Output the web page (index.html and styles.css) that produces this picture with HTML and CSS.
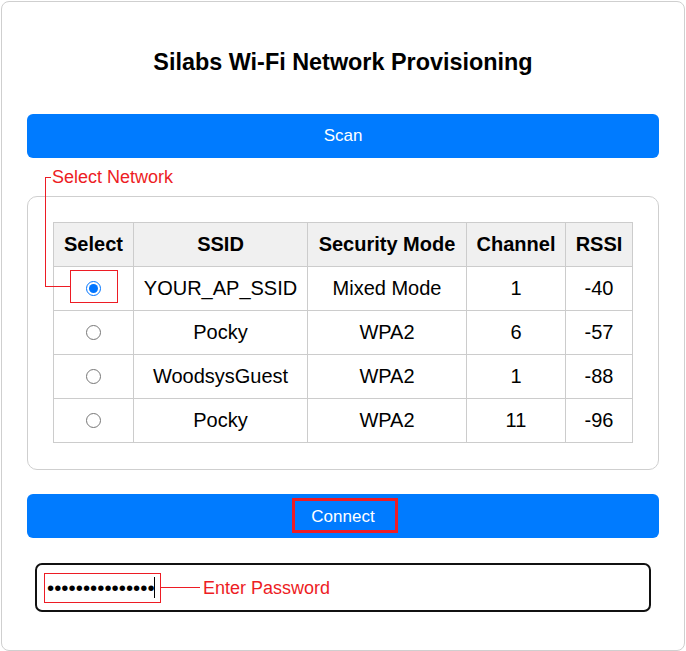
FILE: index.html
```html
<!DOCTYPE html>
<html>
<head>
<meta charset="utf-8">
<link rel="stylesheet" href="styles.css">
</head>
<body>
<div class="card">
  <h1 class="title">Silabs Wi-Fi Network Provisioning</h1>
  <button class="btn">Scan</button>
  <div class="spacer"></div>
  <div class="netbox">
    <table class="nets">
      <thead>
        <tr><th class="c1">Select</th><th class="c2">SSID</th><th class="c3">Security Mode</th><th class="c4">Channel</th><th class="c5">RSSI</th></tr>
      </thead>
      <tbody>
        <tr><td><input type="radio" name="net" checked></td><td>YOUR_AP_SSID</td><td>Mixed Mode</td><td>1</td><td>-40</td></tr>
        <tr><td><input type="radio" name="net"></td><td>Pocky</td><td>WPA2</td><td>6</td><td>-57</td></tr>
        <tr><td><input type="radio" name="net"></td><td>WoodsysGuest</td><td>WPA2</td><td>1</td><td>-88</td></tr>
        <tr><td><input type="radio" name="net"></td><td>Pocky</td><td>WPA2</td><td>11</td><td>-96</td></tr>
      </tbody>
    </table>
  </div>
  <button class="btn btn-connect">Connect</button>
  <div class="pwrow">
    <input class="pw" type="password" value="123456789012345">
  </div>
</div>
<div class="overlay">
  <span class="ann-label ann-select">Select Network</span>
  <div class="ln ln-a"></div>
  <div class="ln ln-b"></div>
  <div class="ln ln-c"></div>
  <div class="box box-radio"></div>
  <div class="box box-connect"></div>
  <div class="box box-pw"></div>
  <div class="ln ln-pw"></div>
  <span class="ann-label ann-pw">Enter Password</span>
  <div class="caret"></div>
</div>
</body>
</html>
```

FILE: styles.css
```css
* { box-sizing: border-box; }
html, body { margin: 0; padding: 0; background: #fff; }
body {
  position: relative;
  font-family: "Liberation Sans", Arial, sans-serif;
  width: 686px;
  height: 651px;
  overflow: hidden;
}
.card {
  margin: 1px 0 0 1px;
  width: 684px;
  height: 650px;
  border: 1px solid #cfcfcf;
  border-radius: 8px;
  padding: 0 25px;
  display: flex;
  flex-direction: column;
}
.title {
  margin: 46px 0 0;
  height: 28px;
  line-height: 28px;
  font-size: 23.4px;
  font-weight: bold;
  text-align: center;
  color: #000;
}
.btn {
  margin-top: 38px;
  height: 44px;
  width: 100%;
  border: none;
  border-radius: 6px;
  background: #007bff;
  color: #fff;
  font-family: "Liberation Sans", Arial, sans-serif;
  font-size: 17px;
  padding: 0;
  flex-shrink: 0;
}
.spacer { height: 38px; flex-shrink: 0; }
.netbox {
  border: 1px solid #cfcfcf;
  border-radius: 10px;
  padding: 25px 25px 26px;
}
.nets {
  border-collapse: collapse;
  font-size: 20px;
  color: #000;
}
.nets th, .nets td {
  border: 1px solid #cccccc;
  height: 44px;
  padding: 0;
  text-align: center;
}
.nets th { background: #f0f0f0; font-weight: bold; }
.c1 { width: 80px; }
.c2 { width: 174px; }
.c3 { width: 159px; }
.c4 { width: 99px; }
.c5 { width: 67px; }
.nets input[type=radio] {
  margin: 0;
  width: 15px;
  height: 15px;
  vertical-align: middle;
  accent-color: #0075ff;
  position: relative;
  top: -1px;
}
.btn-connect { margin-top: 24px; padding-top: 2px; }
.pwrow { padding: 25px 8px 0; }
.pw {
  width: 100%;
  height: 49px;
  border: 2px solid #111;
  border-radius: 7px;
  padding: 0 10px;
  font-family: "Liberation Sans", Arial, sans-serif;
  font-size: 20.5px;
  outline: none;
  color: #000;
}
.overlay { position: absolute; left: 0; top: 0; width: 686px; height: 651px; pointer-events: none; }
.ann-label {
  position: absolute;
  color: #ed1c24;
  font-size: 18px;
  line-height: 20px;
  white-space: nowrap;
}
.ann-select { left: 52px; top: 167px; }
.ann-pw { left: 203px; top: 578px; }
.ln { position: absolute; background: #ed1c24; }
.ln-a { left: 45px; top: 177px; width: 6px; height: 1px; }
.ln-b { left: 45px; top: 177px; width: 1px; height: 110px; }
.ln-c { left: 45px; top: 286px; width: 26px; height: 1px; }
.ln-pw { left: 161px; top: 587px; width: 39px; height: 1px; }
.box { position: absolute; border: 1px solid #ed1c24; }
.box-radio { left: 70px; top: 270px; width: 48px; height: 33px; }
.box-connect { left: 292px; top: 498px; width: 106px; height: 35px; border-width: 3px; }
.box-pw { left: 44px; top: 573px; width: 117px; height: 30px; }
.caret { position: absolute; left: 154px; top: 577px; width: 1px; height: 21px; background: #000; }
```
